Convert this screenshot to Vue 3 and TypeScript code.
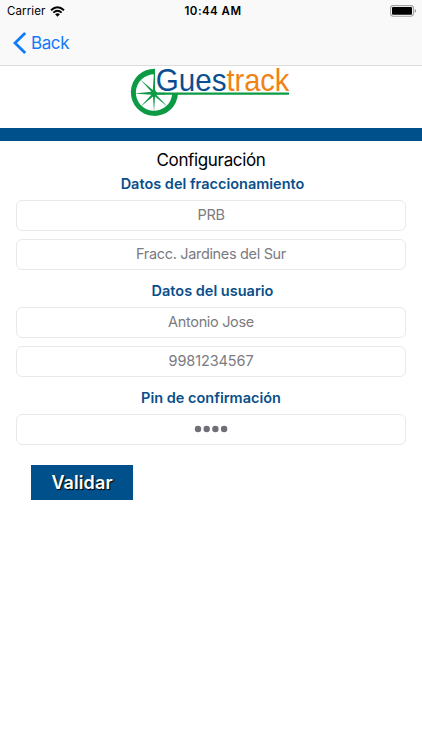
<script setup lang="ts">
import { ref } from 'vue'

interface Field {
  name: string
  type: string
  value: string
}
interface Group {
  id: string
  title: string
  fields: Field[]
}

const groups = ref<Group[]>([
  {
    id: 'estate',
    title: 'Datos del fraccionamiento',
    fields: [
      { name: 'code', type: 'text', value: 'PRB' },
      { name: 'place', type: 'text', value: 'Fracc. Jardines del Sur' },
    ],
  },
  {
    id: 'person',
    title: 'Datos del usuario',
    fields: [
      { name: 'user', type: 'text', value: 'Antonio Jose' },
      { name: 'phone', type: 'tel', value: '9981234567' },
    ],
  },
  {
    id: 'security',
    title: 'Pin de confirmación',
    fields: [{ name: 'pin', type: 'pin', value: '1234' }],
  },
])
</script>

<template>
  <div class="screen">
    <header class="top">
      <div class="status">
        <div class="carrier">
          <span class="carrier-name">Carrier</span>
          <svg class="wifi" width="15" height="11" viewBox="0 0 15 11">
            <path d="M1 4.2Q7.5 -1.6 14 4.2" fill="none" stroke="#000" stroke-width="2" />
            <path d="M3.3 6.6Q7.5 2.9 11.7 6.6" fill="none" stroke="#000" stroke-width="1.8" />
            <path d="M5.1 8.3Q7.5 6.3 9.9 8.3L7.5 10.7Z" />
          </svg>
        </div>
        <span class="clock">10:44 AM</span>
        <svg class="battery" width="27" height="12" viewBox="0 0 27 12">
          <rect x="0.6" y="0.6" width="22.8" height="10.6" rx="2.6" fill="#fff" stroke="#a2a2a2" stroke-width="1.1" />
          <rect x="2" y="2" width="20" height="7.8" rx="1.1" />
          <path d="M24.6 4.1Q26.2 4.6 26.2 5.9T24.6 7.7Z" fill="#999" />
        </svg>
      </div>
      <nav class="nav">
        <svg width="14" height="22" viewBox="0 0 14 22">
          <path d="M12.2 1L2 11L12.2 21" fill="none" stroke="#127bf8" stroke-width="2.8" />
        </svg>
        <span class="back">Back</span>
      </nav>
    </header>

    <div class="brand">
      <svg class="logo" width="162" height="52" viewBox="0 0 162 52">
        <g fill="#0d9a45">
          <path d="M25 2.7V8.4A18.2 18.2 0 1 0 42.2 27.8H48A23.6 23.6 0 1 1 25 2.7Z" />
          <path d="M25 7.5V24L27 26.7H35V28.4L26 28.6L37.8 41L25 30.4L24 46L23 30.4L10.2 41L21.4 28.8L4 27.4L21.4 25.8L10.2 13.5L22.8 24L23.9 7.5Z" />
          <path d="M24 26.6H159V28.8H24Z" />
        </g>
        <text x="25.8" y="24.8" textLength="70.8" lengthAdjust="spacingAndGlyphs" fill="#0b4f90">Gues</text>
        <text x="96.4" y="24.8" textLength="63" lengthAdjust="spacingAndGlyphs" fill="#ef8315">track</text>
      </svg>
    </div>
    <div class="band"></div>

    <main class="form">
      <h1>Configuración</h1>
      <section v-for="group in groups" :key="group.id" :class="['group', group.id]">
        <h2>{{ group.title }}</h2>
        <div v-for="field in group.fields" :key="field.name" class="field">
          <svg v-if="field.type === 'pin'" class="dots" width="34" height="8" viewBox="0 0 34 8">
            <circle v-for="n in field.value.length" :key="n" :cx="4 + (n - 1) * 8.7" cy="4" r="3.2" />
          </svg>
          <span v-else :class="['value', field.name]">{{ field.value }}</span>
        </div>
      </section>
      <button type="button" class="submit">Validar</button>
    </main>
  </div>
</template>

<style>
body {
  background: #fff;
}
</style>

<style scoped>
.screen {
  height: 750px;
  overflow: hidden;
  background: #fff;
  font-family: Inter, "Liberation Sans", sans-serif;
  color: #000;
}
.top {
  box-sizing: border-box;
  height: 66px;
  background: #f9f9f9;
  border-bottom: 1px solid #dcdcdc;
}
.status {
  display: grid;
  grid-template-columns: 1fr auto 1fr;
  align-items: center;
  height: 22px;
  padding: 0 5px 0 7px;
  font-size: 11.5px;
  line-height: 22px;
}
.carrier {
  display: flex;
  align-items: center;
  gap: 5px;
}
.carrier-name {
  letter-spacing: 0.1px;
}
.clock {
  padding-left: 2px;
  font-weight: 600;
  letter-spacing: 0.45px;
}
.battery {
  justify-self: end;
}
.nav {
  display: flex;
  align-items: center;
  gap: 4px;
  height: 42px;
  padding-left: 13px;
  color: #127bf8;
}
.back {
  font-size: 17px;
  letter-spacing: -0.4px;
}
.brand {
  display: flex;
  height: 62px;
  padding-left: 130px;
}
.logo {
  display: block;
  overflow: visible;
  font-family: "Liberation Sans", Arial, sans-serif;
  font-size: 30.5px;
}
.band {
  height: 13px;
  background: #00508c;
}
.form {
  padding: 8px 16px 0;
}
h1 {
  margin: 0;
  font-size: 17px;
  font-weight: 400;
  line-height: 22px;
  letter-spacing: -0.35px;
  text-align: center;
}
.group {
  display: flex;
  flex-direction: column;
  gap: 8px;
  margin-bottom: 8px;
}
h2 {
  margin: 4px 0 0;
  font-size: 14.5px;
  font-weight: 600;
  line-height: 17px;
  color: #0a4f8a;
  text-align: center;
}
.estate h2,
.person h2 {
  padding-left: 3px;
}
.field {
  display: flex;
  align-items: center;
  justify-content: center;
  box-sizing: border-box;
  height: 31px;
  border: 1px solid #e9e9e9;
  border-radius: 6px;
  font-size: 14.5px;
  color: #7b7b80;
}
.value {
  padding-bottom: 2px;
  letter-spacing: -0.33px;
}
.phone {
  letter-spacing: -0.1px;
}
.dots {
  margin-bottom: 2px;
  fill: #6f6f77;
}
.submit {
  display: block;
  width: 102px;
  height: 35px;
  margin: 20px 0 0 15px;
  padding: 0;
  border: 0;
  background: #00508c;
  color: #fff;
  font-family: inherit;
  font-size: 18px;
  font-weight: 600;
  line-height: 35px;
  letter-spacing: 0.1px;
  text-shadow: 1px 1px 1px #000;
}
</style>
